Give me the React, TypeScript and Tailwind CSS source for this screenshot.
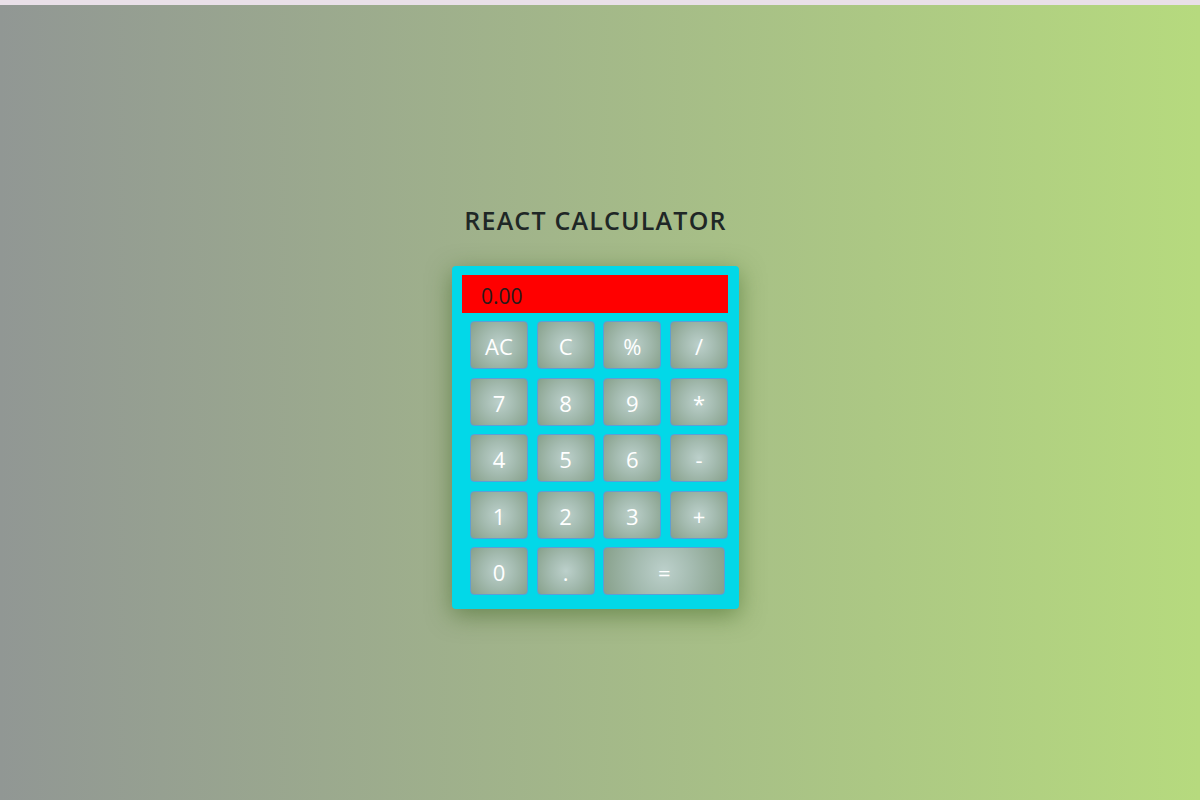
const keys: { label: string; wide?: boolean }[] = [
  { label: "AC" },
  { label: "C" },
  { label: "%" },
  { label: "/" },
  { label: "7" },
  { label: "8" },
  { label: "9" },
  { label: "*" },
  { label: "4" },
  { label: "5" },
  { label: "6" },
  { label: "-" },
  { label: "1" },
  { label: "2" },
  { label: "3" },
  { label: "+" },
  { label: "0" },
  { label: "." },
  { label: "=", wide: true },
];

function Key({ label, wide }: { label: string; wide?: boolean }) {
  return (
    <button
      className={
        (wide ? "col-span-2 w-[122px] " : "w-[58px] ") +
        "h-[48px] pt-[3px] rounded-[4px] border border-[#5b9fd6] bg-[radial-gradient(circle,#bcd0cb_0%,#a4bbb0_45%,#87a08a_100%)] text-[22px] text-white flex items-center justify-center"
      }
    >
      {label}
    </button>
  );
}

export default function App() {
  return (
    <div
      className="min-h-screen flex flex-col bg-[linear-gradient(to_right,#919794,#b6da7e)]"
      style={{ fontFamily: '"Open Sans", "Noto Sans", sans-serif' }}
    >
      <div className="h-[5px] bg-[#e9e0e8]" />
      <div className="flex flex-col items-center pt-[197px] pr-[9px]">
        <h1 className="text-[25px] font-semibold text-[#1f2726] leading-[36px] tracking-[1.2px]">
          REACT CALCULATOR
        </h1>
        <div className="mt-[28px] w-[287px] rounded-[4px] bg-[#02d8e8] pt-[9px] pl-[10px] pr-[11px] pb-[14px] shadow-[0_6px_24px_rgba(50,90,20,0.5)]">
          <div className="h-[38px] bg-[#ff0000] pl-[19px] pt-[5px] flex items-center text-[21px] text-[#2a1a1a]">
            0.00
          </div>
          <div className="mt-[8px] ml-[8px] grid grid-cols-[58px_58px_58px_58px] gap-x-[8.67px] gap-y-[8.5px]">
            {keys.map((k) => (
              <Key key={k.label} label={k.label} wide={k.wide} />
            ))}
          </div>
        </div>
      </div>
    </div>
  );
}
